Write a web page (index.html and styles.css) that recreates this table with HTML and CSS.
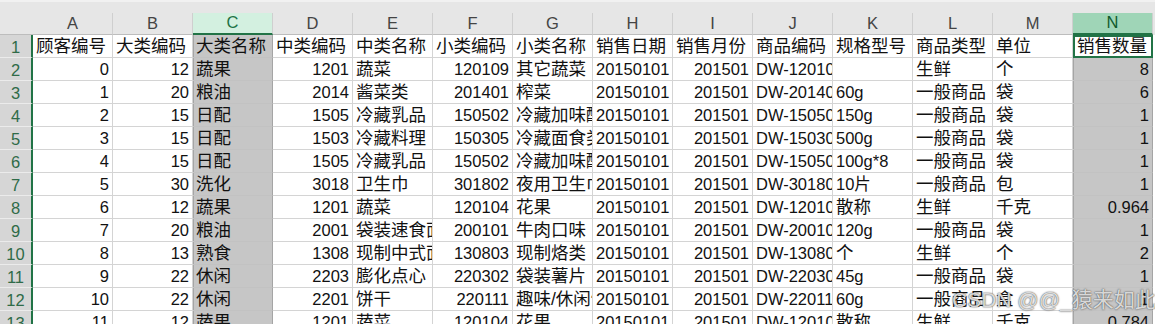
FILE: index.html
```html
<!DOCTYPE html>
<html lang="zh">
<head>
<meta charset="utf-8">
<title>Sheet</title>
<link rel="stylesheet" href="styles.css">
</head>
<body>
<div class="sheet">
  <div class="topstrip"></div>
  <div class="row colhead">
    <div class="corner"></div>
    <div class="ch">A</div><div class="ch">B</div><div class="ch sel">C</div><div class="ch">D</div><div class="ch">E</div><div class="ch">F</div><div class="ch">G</div><div class="ch">H</div><div class="ch">I</div><div class="ch">J</div><div class="ch">K</div><div class="ch">L</div><div class="ch">M</div><div class="ch act">N</div>
  </div>
  <div class="row">
    <div class="rh">1</div>
    <div class="cell c">顾客编号</div><div class="cell c">大类编码</div><div class="cell c s">大类名称</div><div class="cell c">中类编码</div><div class="cell c">中类名称</div><div class="cell c">小类编码</div><div class="cell c">小类名称</div><div class="cell c">销售日期</div><div class="cell c">销售月份</div><div class="cell c">商品编码</div><div class="cell c">规格型号</div><div class="cell c">商品类型</div><div class="cell c">单位</div><div class="cell c active">销售数量</div>
  </div>
  <div class="row">
    <div class="rh">2</div>
    <div class="cell n">0</div><div class="cell n">12</div><div class="cell c s">蔬果</div><div class="cell n">1201</div><div class="cell c">蔬菜</div><div class="cell n">120109</div><div class="cell c">其它蔬菜</div><div class="cell">20150101</div><div class="cell n">201501</div><div class="cell">DW-12010902</div><div class="cell"></div><div class="cell c">生鲜</div><div class="cell c">个</div><div class="cell n s">8</div>
  </div>
  <div class="row">
    <div class="rh">3</div>
    <div class="cell n">1</div><div class="cell n">20</div><div class="cell c s">粮油</div><div class="cell n">2014</div><div class="cell c">酱菜类</div><div class="cell n">201401</div><div class="cell c">榨菜</div><div class="cell">20150101</div><div class="cell n">201501</div><div class="cell">DW-20140104</div><div class="cell">60g</div><div class="cell c">一般商品</div><div class="cell c">袋</div><div class="cell n s">6</div>
  </div>
  <div class="row">
    <div class="rh">4</div>
    <div class="cell n">2</div><div class="cell n">15</div><div class="cell c s">日配</div><div class="cell n">1505</div><div class="cell c">冷藏乳品</div><div class="cell n">150502</div><div class="cell c">冷藏加味酸奶</div><div class="cell">20150101</div><div class="cell n">201501</div><div class="cell">DW-15050203</div><div class="cell">150g</div><div class="cell c">一般商品</div><div class="cell c">袋</div><div class="cell n s">1</div>
  </div>
  <div class="row">
    <div class="rh">5</div>
    <div class="cell n">3</div><div class="cell n">15</div><div class="cell c s">日配</div><div class="cell n">1503</div><div class="cell c">冷藏料理</div><div class="cell n">150305</div><div class="cell c">冷藏面食类</div><div class="cell">20150101</div><div class="cell n">201501</div><div class="cell">DW-15030501</div><div class="cell">500g</div><div class="cell c">一般商品</div><div class="cell c">袋</div><div class="cell n s">1</div>
  </div>
  <div class="row">
    <div class="rh">6</div>
    <div class="cell n">4</div><div class="cell n">15</div><div class="cell c s">日配</div><div class="cell n">1505</div><div class="cell c">冷藏乳品</div><div class="cell n">150502</div><div class="cell c">冷藏加味酸奶</div><div class="cell">20150101</div><div class="cell n">201501</div><div class="cell">DW-15050208</div><div class="cell">100g*8</div><div class="cell c">一般商品</div><div class="cell c">袋</div><div class="cell n s">1</div>
  </div>
  <div class="row">
    <div class="rh">7</div>
    <div class="cell n">5</div><div class="cell n">30</div><div class="cell c s">洗化</div><div class="cell n">3018</div><div class="cell c">卫生巾</div><div class="cell n">301802</div><div class="cell c">夜用卫生巾</div><div class="cell">20150101</div><div class="cell n">201501</div><div class="cell">DW-30180201</div><div class="cell">10片</div><div class="cell c">一般商品</div><div class="cell c">包</div><div class="cell n s">1</div>
  </div>
  <div class="row">
    <div class="rh">8</div>
    <div class="cell n">6</div><div class="cell n">12</div><div class="cell c s">蔬果</div><div class="cell n">1201</div><div class="cell c">蔬菜</div><div class="cell n">120104</div><div class="cell c">花果</div><div class="cell">20150101</div><div class="cell n">201501</div><div class="cell">DW-12010411</div><div class="cell c">散称</div><div class="cell c">生鲜</div><div class="cell c">千克</div><div class="cell n s">0.964</div>
  </div>
  <div class="row">
    <div class="rh">9</div>
    <div class="cell n">7</div><div class="cell n">20</div><div class="cell c s">粮油</div><div class="cell n">2001</div><div class="cell c">袋装速食面</div><div class="cell n">200101</div><div class="cell c">牛肉口味</div><div class="cell">20150101</div><div class="cell n">201501</div><div class="cell">DW-20010102</div><div class="cell">120g</div><div class="cell c">一般商品</div><div class="cell c">袋</div><div class="cell n s">1</div>
  </div>
  <div class="row">
    <div class="rh">10</div>
    <div class="cell n">8</div><div class="cell n">13</div><div class="cell c s">熟食</div><div class="cell n">1308</div><div class="cell c">现制中式面点</div><div class="cell n">130803</div><div class="cell c">现制烙类</div><div class="cell">20150101</div><div class="cell n">201501</div><div class="cell">DW-13080301</div><div class="cell c">个</div><div class="cell c">生鲜</div><div class="cell c">个</div><div class="cell n s">2</div>
  </div>
  <div class="row">
    <div class="rh">11</div>
    <div class="cell n">9</div><div class="cell n">22</div><div class="cell c s">休闲</div><div class="cell n">2203</div><div class="cell c">膨化点心</div><div class="cell n">220302</div><div class="cell c">袋装薯片</div><div class="cell">20150101</div><div class="cell n">201501</div><div class="cell">DW-22030201</div><div class="cell">45g</div><div class="cell c">一般商品</div><div class="cell c">袋</div><div class="cell n s">1</div>
  </div>
  <div class="row">
    <div class="rh">12</div>
    <div class="cell n">10</div><div class="cell n">22</div><div class="cell c s">休闲</div><div class="cell n">2201</div><div class="cell c">饼干</div><div class="cell n">220111</div><div class="cell c">趣味/休闲饼干</div><div class="cell">20150101</div><div class="cell n">201501</div><div class="cell">DW-22011102</div><div class="cell">60g</div><div class="cell c">一般商品</div><div class="cell c">盒</div><div class="cell n s">1</div>
  </div>
  <div class="row">
    <div class="rh">13</div>
    <div class="cell n">11</div><div class="cell n">12</div><div class="cell c s">蔬果</div><div class="cell n">1201</div><div class="cell c">蔬菜</div><div class="cell n">120104</div><div class="cell c">花果</div><div class="cell">20150101</div><div class="cell n">201501</div><div class="cell">DW-12010411</div><div class="cell c">散称</div><div class="cell c">生鲜</div><div class="cell c">千克</div><div class="cell n s">0.784</div>
  </div>
  <div class="watermark">CSDN @@_猿来如此</div>
</div>
</body>
</html>
```

FILE: styles.css
```css
html, body {
  margin: 0;
  padding: 0;
  background: #ffffff;
  overflow: hidden;
}

.sheet {
  position: relative;
  width: 1155px;
  height: 324px;
  overflow: hidden;
  font-family: "Liberation Sans", "Noto Sans CJK SC", sans-serif;
  font-size: 16.5px;
  color: #111;
  background: #e6e6e6;
}

.topstrip {
  height: 11px;
  background: #e6e6e6;
  border-top: 2px solid #f1f1f1;
}

.row {
  display: grid;
  grid-template-columns: 33px repeat(14, 80px) 2px;
  height: 23px;
  background: #ffffff;
}

.row.colhead {
  height: 22px;
  background: #e6e6e6;
}

.corner {
  background: #e6e6e6;
  border-bottom: 1px solid #bdbdbd;
  box-sizing: border-box;
}

.ch {
  box-sizing: border-box;
  border-right: 1px solid #cfcfcf;
  border-bottom: 1px solid #bdbdbd;
  display: flex;
  align-items: flex-end;
  justify-content: center;
  padding-bottom: 2px;
  line-height: 18px;
  color: #444;
}

.ch.sel {
  background: #d3f0e0;
  border-bottom: 2px solid #217346;
  color: #217346;
}

.ch.act {
  background: #9fd5b7;
  border-bottom: 2px solid #217346;
  color: #0f5a2d;
}

.rh {
  box-sizing: border-box;
  background: #d6d6d6;
  border-right: 2px solid #217346;
  border-bottom: 1px solid #ebebeb;
  display: flex;
  align-items: flex-end;
  justify-content: center;
  padding-bottom: 1px;
  line-height: 18px;
  color: #2f6b48;
}

.cell {
  box-sizing: border-box;
  border-right: 1px solid #d4d4d4;
  border-bottom: 1px solid #d4d4d4;
  display: flex;
  align-items: flex-end;
  padding: 0 3px 1px 3px;
  line-height: 19px;
  white-space: nowrap;
  overflow: hidden;
}

.cell.n {
  justify-content: flex-end;
}

.cell.c {
  font-size: 17.5px;
}

.cell.s {
  background: #c6c6c6;
  border-bottom-color: #c2c2c2;
  border-right-color: #a5a5a5;
  box-shadow: inset 1px 0 0 #a5a5a5;
}

.cell.active {
  background: #ffffff;
  border: 2px solid #217346;
  padding: 0 2px 0 2px;
}

.watermark {
  position: absolute;
  left: 952px;
  top: 287px;
  font-size: 21px;
  line-height: 26px;
  color: rgba(255, 255, 255, 0.8);
  text-shadow: 0 0 1px rgba(60, 60, 60, 0.9), 0 0 2px rgba(60, 60, 60, 0.6);
  white-space: nowrap;
}
```
